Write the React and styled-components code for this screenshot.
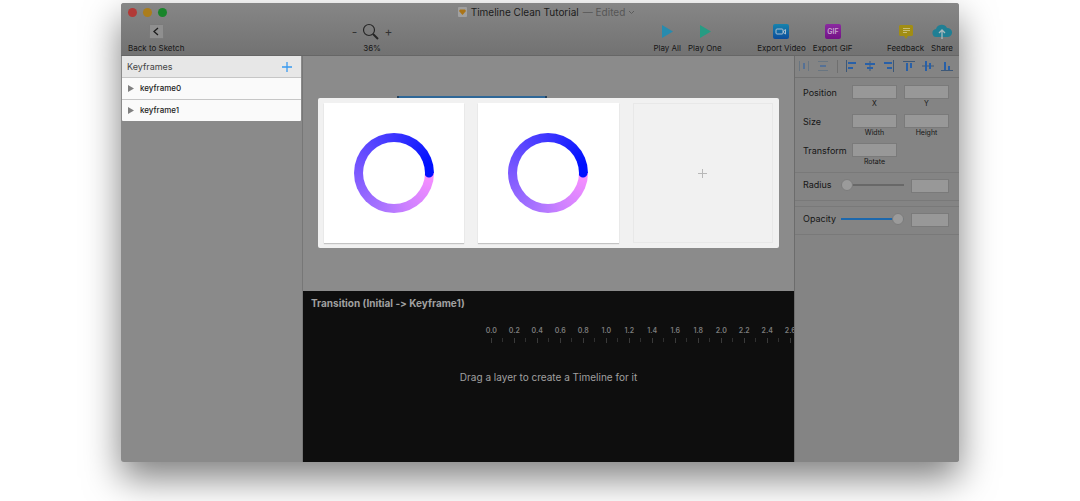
import React, { useState } from "react";
import styled, { createGlobalStyle } from "styled-components";

const GlobalStyle = createGlobalStyle`
  * {
    box-sizing: border-box;
  }
  body {
    margin: 0;
    background: #fff;
    font-family: Inter, "Liberation Sans", sans-serif;
    font-size: 9px;
    line-height: 12px;
    font-feature-settings: "calt" 0;
    color: #161616;
  }
  button,
  input {
    font: inherit;
    color: inherit;
  }
  button {
    padding: 0;
    border: 0;
    background: none;
  }
  svg {
    display: block;
  }
`;

const Page = styled.div`
  min-height: 100vh;
  padding: 3px 121px 39px;
  display: flex;
`;

const Window = styled.main`
  flex: 1;
  min-width: 0;
  display: flex;
  flex-direction: column;
  overflow: hidden;
  border-radius: 3px;
  background: #8a8a8a;
  box-shadow: 0 16px 36px rgba(0, 0, 0, 0.5);
`;

const Header = styled.header`
  height: 53px;
  background: linear-gradient(#868686, #727272);
  border-bottom: 1px solid #666;
`;

const TitleBar = styled.div`
  height: 18px;
  padding: 0 7px;
  display: grid;
  grid-template-columns: 1fr auto 1fr;
  align-items: center;
`;

const Lights = styled.div`
  display: flex;
  gap: 6px;
`;

const Light = styled.button`
  width: 9px;
  height: 9px;
  border-radius: 50%;
  background: ${(props) => props.$color};
`;

const Title = styled.h1`
  margin: 0;
  padding-left: 12px;
  display: flex;
  align-items: center;
  gap: 4px;
  font-size: 10px;
  font-weight: 400;
  color: #1c1c1c;
`;

const Edited = styled.button`
  display: flex;
  align-items: center;
  gap: 3px;
  color: #565656;
`;

const Toolbar = styled.div`
  height: 34px;
  padding: 0 6px 0 7px;
  display: flex;
`;

const Spacer = styled.div`
  flex: ${(props) => props.$grow} 0 0;
`;

const ToolGroup = styled.div`
  display: flex;
  gap: 7px;
`;

const Tool = styled.button`
  display: flex;
  flex-direction: column;
  align-items: center;
  gap: 2px;
  font-size: 8px;
  line-height: 11px;
  white-space: nowrap;
  svg {
    height: 20px;
  }
`;

const ZoomTool = styled(Tool).attrs({ as: "div" })`
  div {
    display: flex;
    align-items: center;
    gap: 5px;
    font-size: 12px;
    color: #333;
  }
`;

const Body = styled.div`
  flex: 1;
  display: grid;
  grid-template-columns: 181px minmax(0, 1fr) 165px;
`;

const Sidebar = styled.aside`
  padding: 0 1px;
`;

const Keyframes = styled.section`
  background: #fafafa;
  border-radius: 1px;
  overflow: hidden;
  ul {
    margin: 0;
    padding: 0;
    list-style: none;
  }
  li {
    height: 22px;
    border-top: 1px solid #c6c6c6;
  }
`;

const PanelHeader = styled.div`
  height: 21px;
  padding: 0 9px 0 5px;
  display: flex;
  align-items: center;
  justify-content: space-between;
  background: #e7e7e7;
  color: #444;
  h2 {
    margin: 0;
    font-size: 9px;
    font-weight: 400;
  }
`;

const Keyframe = styled.button`
  width: 100%;
  height: 20px;
  padding: 0 6px;
  display: flex;
  align-items: center;
  gap: 6px;
  font-size: 8px;
  font-weight: 500;
  color: #222;
`;

const Center = styled.section`
  display: flex;
  flex-direction: column;
  border-left: 1px solid #777;
`;

const Canvas = styled.div`
  height: 235px;
  padding: 40px 15px 0;
  background: #8b8b8b;
`;

const Artboard = styled.div`
  width: 150px;
  height: 2px;
  margin-left: 79px;
  background: #2f6797;
  border: solid #24415c;
  border-width: 0 2px;
`;

const Frames = styled.div`
  padding: 5px 6px 5px 6px;
  display: grid;
  grid-template-columns: repeat(3, minmax(0, 1fr));
  gap: 14px;
  background: #f1f1f1;
  border-radius: 2px;
`;

const Frame = styled.button`
  height: 140px;
  display: grid;
  place-items: center;
  background: #fff;
  box-shadow: 0 1px 1px #c4c4c4;
`;

const EmptyFrame = styled(Frame)`
  background: none;
  border: 1px solid #e8e8e8;
  box-shadow: none;
`;

const Ring = styled.span`
  width: 80px;
  height: 80px;
  padding: 9px;
  display: block;
  border-radius: 50%;
  background: radial-gradient(circle at 75px 40px, #0011ff 4px, transparent 5px),
    conic-gradient(
      from 90deg,
      #fa90ff,
      #cc80ff 70deg,
      #b077ff 100deg,
      #7c59ff 180deg,
      #3c35ff 270deg,
      #0011ff 345deg
    );
  &::before {
    content: "";
    display: block;
    height: 62px;
    border-radius: 50%;
    background: #fff;
  }
`;

const Timeline = styled.div`
  flex: 1;
  padding-top: 5px;
  background: #0e0e0e;
  color: #a0a0a0;
  h2 {
    margin: 0 8px;
    font-size: 10px;
    line-height: 14px;
  }
  p {
    margin: 27px 0 0;
    font-size: 10px;
    line-height: 14px;
    text-align: center;
  }
`;

const Ruler = styled.div`
  margin: 16px 0 0 36%;
  display: flex;
  overflow: hidden;
`;

const Mark = styled.div`
  flex: 0 0 23px;
  font-size: 7px;
  line-height: 10px;
  font-weight: 600;
  text-align: center;
  color: #7c7c7c;
`;

const Ticks = styled.div`
  height: 5px;
  margin: 2px 0 0 50%;
  display: flex;
  justify-content: space-between;
  i {
    width: 1px;
    background: #3a3a3a;
  }
  i + i {
    height: 4px;
    background: #303030;
  }
`;

const Inspector = styled.aside`
  background: #848484;
  border-left: 1px solid #6c6c6c;
`;

const AlignBar = styled.div`
  height: 22px;
  padding: 0 6px 1px 3px;
  display: flex;
  align-items: center;
  justify-content: space-between;
  border-bottom: 1px solid #737373;
  color: #2860a8;
`;

const AlignButton = styled.button`
  color: inherit;
  opacity: ${(props) => (props.disabled ? 0.5 : 1)};
`;

const Divider = styled.span`
  width: 1px;
  height: 13px;
  background: #6f6f6f;
`;

const Properties = styled.div`
  height: 94px;
  padding: 7px 9px 0 8px;
  display: flex;
  flex-direction: column;
  gap: 5px;
`;

const Row = styled.fieldset`
  min-width: 0;
  margin: 0;
  padding: 0;
  border: 0;
  display: grid;
  grid-template-columns: 49px 45px 52px;
  label + label {
    padding-left: 7px;
  }
`;

const RowName = styled.span`
  line-height: 15px;
`;

const Field = styled.label`
  display: flex;
  flex-direction: column;
  font-size: 7px;
  line-height: 10px;
  text-align: center;
`;

const Input = styled.input`
  width: 100%;
  min-width: 0;
  height: 14px;
  padding: 0 3px;
  font-size: 8px;
  background: #989898;
  border: 1px solid #7a7a7a;
  outline: 0;
`;

const SliderRow = styled.div`
  height: 29px;
  padding: 6px 9px 0 8px;
  display: grid;
  grid-template-columns: 38px 63px 38px;
  border: solid #797979;
  border-width: 1px 0;
  input:last-child {
    margin-left: 7px;
  }
  & + & {
    margin-top: 5px;
  }
`;

const Slider = styled.input`
  width: 100%;
  height: 12px;
  margin: 0;
  appearance: none;
  background: linear-gradient(
      90deg,
      #1c68ad ${(props) => props.value}%,
      #686868 ${(props) => props.value}%
    )
    center / 100% 2px no-repeat;
  &::-webkit-slider-thumb {
    appearance: none;
    width: 12px;
    height: 12px;
    border-radius: 50%;
    background: #9b9b9b;
    border: 1px solid #7c7c7c;
  }
`;

const TOOLS = {
  playAll: (
    <svg width="12" viewBox="0 0 12 20">
      <path d="M1 4l11 6.500L1 17z" fill="#278bae" />
    </svg>
  ),
  playOne: (
    <svg width="12" viewBox="0 0 12 20">
      <path d="M1 4l11 6.500L1 17z" fill="#279b83" />
    </svg>
  ),
  video: (
    <svg width="16" viewBox="0 0 16 20">
      <defs>
        <linearGradient id="video" x2="0" y2="1">
          <stop stopColor="#1683ad" />
          <stop offset="1" stopColor="#0c4c9b" />
        </linearGradient>
      </defs>
      <rect y="3" width="16" height="15" rx="2" fill="url(#video)" />
      <rect x="3" y="8" width="7" height="5" rx="1" fill="none" stroke="#a9bed0" />
      <path d="M10.500 10l2-1.500v4.500l-2-1.500z" fill="none" stroke="#a9bed0" />
    </svg>
  ),
  gif: (
    <svg width="16" viewBox="0 0 16 20">
      <defs>
        <linearGradient id="gif" x2="0" y2="1">
          <stop stopColor="#8a2aa0" />
          <stop offset="1" stopColor="#741286" />
        </linearGradient>
      </defs>
      <rect y="3" width="16" height="15" rx="2" fill="url(#gif)" />
      <text x="8" y="13" fontSize="7" fontWeight="600" textAnchor="middle" fill="#c7a8ce">
        GIF
      </text>
    </svg>
  ),
  feedback: (
    <svg width="16" viewBox="0 0 16 20">
      <path d="M2 4h12l1 1v9l-1 1h-4l-2 3-2-3H2l-1-1V5z" fill="#a18d14" />
      <path d="M5 7.500h7M5 9.500h7M5 11.500h4" stroke="#c8bd77" />
    </svg>
  ),
  share: (
    <svg width="20" viewBox="0 0 20 20">
      <path d="M5 16a4 4 0 0 1-1-8 6 6 0 0 1 11-1 4.500 4.500 0 0 1 1 9z" fill="#207f94" />
      <path d="M10 18V9M7 12l3-3 3 3" fill="none" stroke="#a9b9bd" strokeWidth="1.300" />
    </svg>
  ),
};

const ALIGNMENTS = [
  { name: "Distribute horizontally", disabled: true, path: "M1.500 1v10M10.500 1v10", bars: [[5, 3, 2, 6]] },
  { name: "Distribute vertically", disabled: true, path: "M1 1.500h10M1 10.500h10", bars: [[3, 5, 6, 2]] },
  { name: "Align left", path: "M1.500 0v12", bars: [[3, 2, 8, 2], [3, 7, 5, 2]] },
  { name: "Align center", path: "M6 1v10", bars: [[1, 3, 10, 2], [3, 7, 6, 2]] },
  { name: "Align right", path: "M10.500 0v12", bars: [[1, 2, 8, 2], [4, 7, 5, 2]] },
  { name: "Align top", path: "M0 1.500h12", bars: [[3, 3, 2, 8], [7, 3, 2, 5]] },
  { name: "Align middle", path: "M0 6h12", bars: [[3, 1, 2, 10], [7, 3, 2, 6]] },
  { name: "Align bottom", path: "M0 10.500h12", bars: [[3, 2, 2, 8], [7, 6, 2, 4]] },
];

const MARKS = Array.from({ length: 14 }, (_, i) => (i * 0.2).toFixed(1));

const AlignIcon = ({ item }) => (
  <AlignButton aria-label={item.name} disabled={item.disabled}>
    <svg width="12" height="12" viewBox="0 0 12 12">
      <path d={item.path} stroke={item.disabled ? "#4d6880" : "#3d5878"} />
      {item.bars.map(([x, y, w, h]) => (
        <rect key={`${x}-${y}`} x={x} y={y} width={w} height={h} fill="currentColor" />
      ))}
    </svg>
  </AlignButton>
);

const PropertyRow = ({ name, fields }) => (
  <Row aria-label={name}>
    <RowName>{name}</RowName>
    {fields.map((field) => (
      <Field key={field}>
        <Input type="text" />
        {field}
      </Field>
    ))}
  </Row>
);

const SliderProperty = ({ name, initial }) => {
  const [value, setValue] = useState(initial);
  const id = name.toLowerCase();
  return (
    <SliderRow>
      <label htmlFor={id}>{name}</label>
      <Slider
        id={id}
        type="range"
        value={value}
        onChange={(e) => setValue(Number(e.target.value))}
      />
      <Input type="text" aria-label={`${name} value`} />
    </SliderRow>
  );
};

const WindowHeader = () => (
  <Header>
    <TitleBar>
      <Lights>
        <Light $color="#b23a37" aria-label="Close" />
        <Light $color="#ab7d1c" aria-label="Minimize" />
        <Light $color="#18852a" aria-label="Zoom window" />
      </Lights>
      <Title>
        <svg width="10" height="10" viewBox="0 0 10 10">
          <rect x="1" width="9" height="10" rx="1" fill="#a0a0a0" />
          <path d="M3 2.500h5l1 1.500-3.500 4L2 4z" fill="#aa7417" />
        </svg>
        Timeline Clean Tutorial
        <Edited>
          — Edited
          <svg width="7" height="5" viewBox="0 0 7 5">
            <path d="M1 1l2.500 2.500L6 1" fill="none" stroke="#5c5c5c" />
          </svg>
        </Edited>
      </Title>
    </TitleBar>
    <Toolbar>
      <Tool>
        <svg width="15" viewBox="0 0 15 20">
          <rect x=".5" y="3.500" width="14" height="14" rx="1" fill="#8f8f8f" stroke="#7b7b7b" />
          <path d="M9 7l-4 3.500L9 14" fill="none" stroke="#1c1c1c" strokeWidth="1.300" />
        </svg>
        Back to Sketch
      </Tool>
      <Spacer $grow={170} />
      <ZoomTool>
        <div>
          <button aria-label="Zoom out">-</button>
          <svg width="17" viewBox="0 0 17 20">
            <circle cx="7" cy="9" r="5.500" fill="none" stroke="#262626" strokeWidth="1.200" />
            <path d="M11 13l5 5" stroke="#262626" strokeWidth="2" />
          </svg>
          <button aria-label="Zoom in">+</button>
        </div>
        36%
      </ZoomTool>
      <Spacer $grow={265} />
      <ToolGroup>
        <Tool>{TOOLS.playAll}Play All</Tool>
        <Tool>{TOOLS.playOne}Play One</Tool>
      </ToolGroup>
      <Spacer $grow={36} />
      <ToolGroup>
        <Tool>{TOOLS.video}Export Video</Tool>
        <Tool>{TOOLS.gif}Export GIF</Tool>
      </ToolGroup>
      <Spacer $grow={35} />
      <ToolGroup>
        <Tool>{TOOLS.feedback}Feedback</Tool>
        <Tool>{TOOLS.share}Share</Tool>
      </ToolGroup>
    </Toolbar>
  </Header>
);

const App = () => {
  return (
    <>
      <GlobalStyle />
      <Page>
        <Window>
          <WindowHeader />
          <Body>
            <Sidebar>
              <Keyframes>
                <PanelHeader>
                  <h2>Keyframes</h2>
                  <button aria-label="Add keyframe">
                    <svg width="10" height="10" viewBox="0 0 10 10">
                      <path d="M5 0v10M0 5h10" stroke="#399af0" strokeWidth="1.300" />
                    </svg>
                  </button>
                </PanelHeader>
                <ul>
                  {["keyframe0", "keyframe1"].map((name) => (
                    <li key={name}>
                      <Keyframe>
                        <svg width="6" height="8" viewBox="0 0 6 8">
                          <path d="M0 1l6 3.500L0 8z" fill="#808080" />
                        </svg>
                        {name}
                      </Keyframe>
                    </li>
                  ))}
                </ul>
              </Keyframes>
            </Sidebar>
            <Center>
              <Canvas>
                <Artboard />
                <Frames>
                  <Frame aria-label="Initial frame">
                    <Ring />
                  </Frame>
                  <Frame aria-label="Keyframe 1">
                    <Ring />
                  </Frame>
                  <EmptyFrame aria-label="Add frame">
                    <svg width="9" height="9" viewBox="0 0 9 9">
                      <path d="M4.500 0v9M0 4.500h9" stroke="#b8b8b8" />
                    </svg>
                  </EmptyFrame>
                </Frames>
              </Canvas>
              <Timeline>
                <h2>Transition (Initial -&gt; Keyframe1)</h2>
                <Ruler>
                  {MARKS.map((mark) => (
                    <Mark key={mark}>
                      {mark}
                      <Ticks>
                        <i />
                        <i />
                      </Ticks>
                    </Mark>
                  ))}
                </Ruler>
                <p>Drag a layer to create a Timeline for it</p>
              </Timeline>
            </Center>
            <Inspector>
              <AlignBar>
                {ALIGNMENTS.slice(0, 2).map((item) => (
                  <AlignIcon key={item.name} item={item} />
                ))}
                <Divider />
                {ALIGNMENTS.slice(2).map((item) => (
                  <AlignIcon key={item.name} item={item} />
                ))}
              </AlignBar>
              <Properties>
                <PropertyRow name="Position" fields={["X", "Y"]} />
                <PropertyRow name="Size" fields={["Width", "Height"]} />
                <PropertyRow name="Transform" fields={["Rotate"]} />
              </Properties>
              <SliderProperty name="Radius" initial={0} />
              <SliderProperty name="Opacity" initial={100} />
            </Inspector>
          </Body>
        </Window>
      </Page>
    </>
  );
};

export default App;
